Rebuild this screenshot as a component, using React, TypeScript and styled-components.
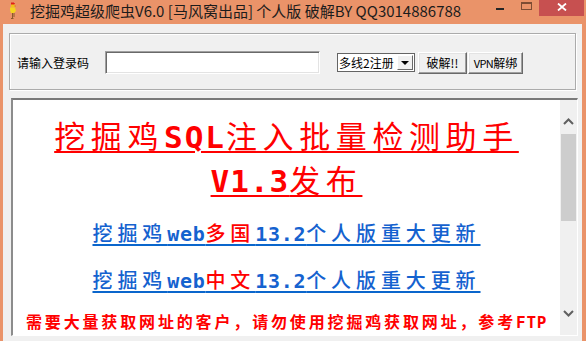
import React from 'react';
import styled, { createGlobalStyle } from 'styled-components';

const GlobalStyle = createGlobalStyle`
  html, body { margin: 0; padding: 0; width: 586px; height: 341px; overflow: hidden; background: #EA9369; }
  #root { width: 586px; height: 341px; }
  * { box-sizing: border-box; }
`;

const Window = styled.div`
  width: 586px;
  height: 341px;
  background: #EA9369;
  display: flex;
  flex-direction: column;
`;

const TitleBar = styled.div`
  height: 24px;
  display: flex;
  align-items: flex-start;
  flex-shrink: 0;
`;

const AppIcon = styled.svg`
  margin: 2px 0 0 9px;
  width: 8px;
  height: 17px;
  flex-shrink: 0;
`;

const TitleText = styled.div`
  margin-left: 13px;
  font-family: "Noto Sans CJK SC", sans-serif;
  font-size: 15px;
  line-height: 22px;
  color: #1c1c1c;
  white-space: nowrap;
`;

const Spacer = styled.div`
  flex: 1;
`;

const CaptionButton = styled.div<{ $w: number; $bg?: string }>`
  width: ${p => p.$w}px;
  height: 16px;
  background: ${p => p.$bg || 'transparent'};
  display: flex;
  align-items: flex-start;
  justify-content: center;
`;

const MinDash = styled.div`
  margin-top: 8px;
  width: 8px;
  height: 2px;
  background: #262626;
`;

const MaxBox = styled.div`
  margin-top: 2px;
  width: 11px;
  height: 8px;
  border: 1px solid #7d4c33;
  border-top-width: 2px;
`;

const CloseGlyph = styled.svg`
  margin-top: 3px;
  width: 10px;
  height: 8px;
`;

const Client = styled.div`
  flex: 1;
  margin: 0 4px 3px 3px;
  background: #F0F0F0;
  display: flex;
  flex-direction: column;
  padding: 9px 0 9px 0;
`;

const GroupBox = styled.div`
  height: 57px;
  margin: 0 6px 0 6px;
  border: 1px solid #ABABAB;
  box-shadow: inset 1px 1px 0 #ffffff, 1px 1px 0 #ffffff;
  display: flex;
  align-items: center;
  padding: 2px 0 0 7px;
  flex-shrink: 0;
`;

const Label = styled.div`
  width: 72px;
  font-family: "Noto Sans CJK SC", sans-serif;
  font-size: 12px;
  line-height: 14px;
  color: #000;
  white-space: nowrap;
`;

const TextInput = styled.div`
  margin-left: 16px;
  width: 215px;
  height: 23px;
  background: #fff;
  border: 1px solid;
  border-color: #a0a0a0 #ffffff #ffffff #a0a0a0;
  box-shadow: inset 1px 1px 0 #696969, inset -1px -1px 0 #e3e3e3;
`;

const Select = styled.div`
  margin-left: 17px;
  width: 78px;
  height: 19px;
  background: #fff;
  border: 1px solid #646464;
  display: flex;
  align-items: stretch;
`;

const SelectText = styled.div`
  flex: 1;
  padding-left: 1px;
  font-family: "Noto Sans CJK SC", sans-serif;
  font-size: 12px;
  line-height: 17px;
  color: #000;
  white-space: nowrap;
  overflow: hidden;
`;

const DropButton = styled.div`
  width: 16px;
  margin: 1px;
  background: #F0F0F0;
  border: 1px solid;
  border-color: #ffffff #696969 #696969 #ffffff;
  display: flex;
  align-items: center;
  justify-content: center;
`;

const Arrow = styled.div`
  width: 0;
  height: 0;
  border-left: 4px solid transparent;
  border-right: 4px solid transparent;
  border-top: 4px solid #000;
`;

const Button = styled.div<{ $w: number; $ml: number }>`
  margin-left: ${p => p.$ml}px;
  width: ${p => p.$w}px;
  height: 22px;
  background: #F0F0F0;
  border: 1px solid;
  border-color: #ffffff #696969 #696969 #ffffff;
  box-shadow: inset -1px -1px 0 #a0a0a0, inset 1px 1px 0 #e3e3e3;
  display: flex;
  align-items: center;
  justify-content: center;
  font-family: "Noto Sans CJK SC", sans-serif;
  font-size: 12px;
  color: #000;
  white-space: nowrap;
`;

const NarrowText = styled.span`
  letter-spacing: -0.6px;
  font-size: 11px;
`;

const Panel = styled.div`
  flex: 1;
  margin: 8px 4px 0 8px;
  display: flex;
  border-style: solid;
  border-width: 2px 1px 1px 2px;
  border-color: #7a7a7a #ffffff #ffffff #8c8c8c;
  overflow: hidden;
`;

const Content = styled.div`
  flex: 1;
  background: #fff;
  display: flex;
  flex-direction: column;
  align-items: center;
  padding-top: 14px;
  overflow: hidden;
`;

const Heading = styled.div<{ $mt?: number }>`
  margin-top: ${p => p.$mt || 0}px;
  font-family: "Noto Sans CJK SC", sans-serif;
  font-size: 31px;
  line-height: 42px;
  color: #ff0000;
  letter-spacing: 5.6px;
  text-decoration: underline;
  text-decoration-thickness: 2px;
  text-underline-offset: 3px;
  white-space: nowrap;
`;

const Latin = styled.span<{ $ls: number }>`
  font-family: "DejaVu Sans Mono", monospace;
  font-weight: bold;
  letter-spacing: ${p => p.$ls}px;
`;

const LinkLine = styled.div<{ $mt: number }>`
  margin-top: ${p => p.$mt}px;
  font-family: "Noto Sans CJK SC", sans-serif;
  font-size: 20px;
  font-weight: 500;
  line-height: 46px;
  color: #1562CF;
  letter-spacing: 4.9px;
  text-decoration: underline;
  text-decoration-color: #0A66CC;
  text-decoration-thickness: 2px;
  text-underline-offset: 3px;
  white-space: nowrap;
`;

const Hot = styled.span`
  color: #ff0000;
`;

const Notice = styled.div`
  margin-top: 5px;
  font-family: "Noto Sans CJK SC", sans-serif;
  font-size: 16px;
  font-weight: bold;
  line-height: 24px;
  color: #ff0000;
  letter-spacing: 2.85px;
  white-space: nowrap;
`;

const Scrollbar = styled.div`
  width: 17px;
  background: #F0F0F0;
  display: flex;
  flex-direction: column;
  align-items: center;
  padding: 13px 0 13px 0;
  flex-shrink: 0;
`;

const ScrollArrow = styled.div`
  height: 17px;
  width: 17px;
  display: flex;
  align-items: center;
  justify-content: center;
  flex-shrink: 0;
`;

const Thumb = styled.div`
  margin-top: 4px;
  width: 15px;
  height: 87px;
  background: #CDCDCD;
  flex-shrink: 0;
`;

const Chevron: React.FC<{ up?: boolean }> = ({ up }) => (
  <svg width="11" height="7" viewBox="0 0 11 7">
    <path
      d={up ? 'M1 6 L5.5 1.5 L10 6' : 'M1 1 L5.5 5.5 L10 1'}
      fill="none"
      stroke="#606060"
      strokeWidth="2"
    />
  </svg>
);

export default function App() {
  return (
    <>
      <GlobalStyle />
      <Window>
        <TitleBar>
          <AppIcon viewBox="0 0 8 17">
            <path d="M2 0 L3 1 L4 0 L5 1 L6 1 L5 3 L2 3 Z" fill="#e0201a" />
            <rect x="2" y="2.5" width="3.5" height="3" fill="#f2c21b" />
            <rect x="5.5" y="3.5" width="1.5" height="1" fill="#d88a10" />
            <path d="M1 5.5 L6 5.5 L7 9 L5 11 L2 11 L1 8 Z" fill="#f5d320" />
            <rect x="3" y="11" width="1" height="5" fill="#8a5a2a" />
            <rect x="4.5" y="11" width="1" height="4" fill="#8a5a2a" />
            <rect x="2" y="16" width="2.5" height="1" fill="#8a5a2a" />
          </AppIcon>
          <TitleText>挖掘鸡超级爬虫V6.0 [马风窝出品] 个人版 破解BY QQ3014886788</TitleText>
          <Spacer />
          <CaptionButton $w={27}>
            <MinDash />
          </CaptionButton>
          <CaptionButton $w={26}>
            <MaxBox />
          </CaptionButton>
          <CaptionButton $w={45} $bg="#C75050" style={{ marginRight: 2 }}>
            <CloseGlyph viewBox="0 0 10 8">
              <path d="M1 0.5 L9 7.5 M9 0.5 L1 7.5" stroke="#ffffff" strokeWidth="1.8" />
            </CloseGlyph>
          </CaptionButton>
        </TitleBar>
        <Client>
          <GroupBox>
            <Label>请输入登录码</Label>
            <TextInput />
            <Select>
              <SelectText>多线2注册</SelectText>
              <DropButton>
                <Arrow />
              </DropButton>
            </Select>
            <Button $w={49} $ml={3}>破解!!</Button>
            <Button $w={55} $ml={1}>
              <NarrowText>VPN</NarrowText>解绑
            </Button>
          </GroupBox>
          <Panel>
            <Content>
              <Heading>
                挖掘鸡<Latin $ls={2}>SQL</Latin>注入批量检测助手
              </Heading>
              <Heading>
                <Latin $ls={1}>V1.3</Latin>发布
              </Heading>
              <LinkLine $mt={8}>
                挖掘鸡<Latin $ls={0.7}>web</Latin>
                <Hot>多国</Hot>
                <Latin $ls={0.7}>13.2</Latin>个人版重大更新
              </LinkLine>
              <LinkLine $mt={0}>
                挖掘鸡<Latin $ls={0.7}>web</Latin>
                <Hot>中文</Hot>
                <Latin $ls={0.7}>13.2</Latin>个人版重大更新
              </LinkLine>
              <Notice>
                需要大量获取网址的客户，请勿使用挖掘鸡获取网址，参考<Latin $ls={0.7}>FTP</Latin>
              </Notice>
            </Content>
            <Scrollbar>
              <ScrollArrow>
                <Chevron up />
              </ScrollArrow>
              <Thumb />
              <Spacer />
              <ScrollArrow>
                <Chevron />
              </ScrollArrow>
            </Scrollbar>
          </Panel>
        </Client>
      </Window>
    </>
  );
}
